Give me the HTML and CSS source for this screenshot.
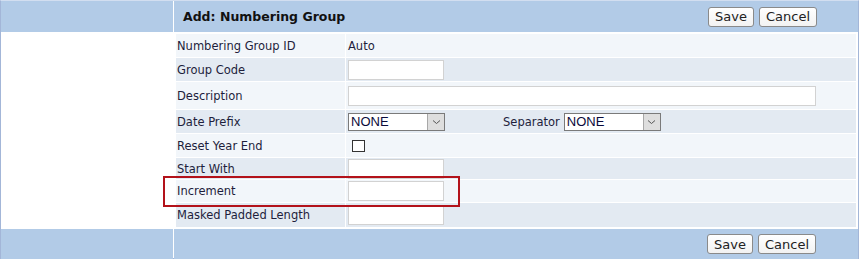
FILE: index.html
```html
<!DOCTYPE html>
<html lang="en">
<head>
    <meta charset="UTF-8">
    <title>Add: Numbering Group</title>
    <link rel="stylesheet" href="styles.css">
</head>
<body>
    <div class="frame">
        <div class="side head"></div>
        <div class="main head">
            <span class="title">Add: Numbering Group</span>
            <div class="actions">
                <button class="btn save">Save</button>
                <button class="btn cancel">Cancel</button>
            </div>
        </div>

        <div class="side"></div>
        <div class="main body">
            <table class="form-table">
                <tr class="light h23">
                    <td class="label">Numbering Group ID</td>
                    <td class="value">Auto</td>
                </tr>
                <tr class="dark h23">
                    <td class="label">Group Code</td>
                    <td class="value"><input type="text" class="field short"></td>
                </tr>
                <tr class="light h27">
                    <td class="label">Description</td>
                    <td class="value"><input type="text" class="field long"></td>
                </tr>
                <tr class="dark h23">
                    <td class="label">Date Prefix</td>
                    <td class="value">
                        <div class="inline">
                            <div class="select">
                                <span class="select-text">NONE</span>
                                <span class="select-btn">
                                    <svg width="9" height="6" viewBox="0 0 9 6"><path d="M1 1.5 L4.5 4.5 L8 1.5" fill="none" stroke="#555" stroke-width="1"/></svg>
                                </span>
                            </div>
                            <span class="sep-label">Separator</span>
                            <div class="select">
                                <span class="select-text">NONE</span>
                                <span class="select-btn">
                                    <svg width="9" height="6" viewBox="0 0 9 6"><path d="M1 1.5 L4.5 4.5 L8 1.5" fill="none" stroke="#555" stroke-width="1"/></svg>
                                </span>
                            </div>
                        </div>
                    </td>
                </tr>
                <tr class="light h23">
                    <td class="label">Reset Year End</td>
                    <td class="value"><span class="check"></span></td>
                </tr>
                <tr class="dark h21">
                    <td class="label">Start With</td>
                    <td class="value"><input type="text" class="field short"></td>
                </tr>
                <tr class="light h22">
                    <td class="label">Increment</td>
                    <td class="value"><input type="text" class="field short"></td>
                </tr>
                <tr class="dark h24">
                    <td class="label">Masked Padded Length</td>
                    <td class="value"><input type="text" class="field short"></td>
                </tr>
            </table>
        </div>

        <div class="side foot"></div>
        <div class="main foot">
            <div class="actions">
                <button class="btn save">Save</button>
                <button class="btn cancel">Cancel</button>
            </div>
        </div>

        <!-- Markierung -->
        <div class="highlight"></div>
    </div>
</body>
</html>
```

FILE: styles.css
```css
body {
    margin: 0;
    padding: 0;
    background-color: #ffffff;
    font-family: "DejaVu Sans", Verdana, sans-serif;
    font-size: 11.5px;
    color: #1e1e3c;
}
.frame {
    position: relative;
    width: 857px;
    height: 257px;
    border: 1px solid #a3b6d8;
    border-top-color: #d2def0;
    display: grid;
    grid-template-columns: 172px 1fr;
    grid-template-rows: 31px 1fr 30px;
    gap: 1px;
    background-color: #ffffff;
}
.head, .foot {
    background-color: #b2cbe7;
}
.main.head {
    display: flex;
    align-items: center;
    justify-content: space-between;
    padding: 0 41px 0 9px;
}
.main.foot {
    display: flex;
    align-items: center;
    justify-content: flex-end;
    padding: 0 42px 0 0;
}
.title {
    font-weight: bold;
    font-size: 12.5px;
    color: #111111;
}
.actions {
    display: flex;
    gap: 5px;
}
.btn {
    height: 20px;
    padding: 0;
    font-family: "DejaVu Sans", Verdana, sans-serif;
    font-size: 13px;
    color: #222222;
    background: linear-gradient(#ffffff, #f2f2f2);
    border: 1px solid #8a8a8a;
    border-radius: 3px;
    cursor: pointer;
}
.btn.save {
    width: 46px;
}
.btn.cancel {
    width: 58px;
}
.main.body {
    padding: 1px 2px 0 2px;
}
.form-table {
    width: 100%;
    border-collapse: separate;
    border-spacing: 0 1px;
    margin-top: -1px;
}
.form-table td {
    padding: 0;
}
.form-table .label {
    width: 168px;
    padding-left: 1px;
    border-right: 1px solid #ffffff;
}
.form-table .value {
    padding-left: 2px;
}
.light td {
    background-color: #f2f6fa;
}
.dark td {
    background-color: #e3eaf2;
}
.h21 td { height: 21px; }
.h22 td { height: 22px; }
.h23 td { height: 23px; }
.h24 td { height: 24px; }
.h27 td { height: 27px; }
.field {
    display: block;
    box-sizing: border-box;
    height: 20px;
    margin: 0;
    padding: 0 2px;
    background-color: #ffffff;
    border: 1px solid #d2d2d2;
    font-size: 12px;
}
.field.short {
    width: 96px;
}
.field.long {
    width: 468px;
}
.inline {
    display: flex;
    align-items: center;
}
.select {
    box-sizing: border-box;
    width: 97px;
    height: 18px;
    display: flex;
    align-items: center;
    justify-content: space-between;
    background-color: #ffffff;
    border: 1px solid #7a7a7a;
    padding-left: 2px;
}
.select-text {
    font-family: "Liberation Sans", Arial, sans-serif;
    font-size: 13px;
    color: #0a0a3a;
}
.select-btn {
    box-sizing: border-box;
    width: 17px;
    height: 16px;
    display: flex;
    align-items: center;
    justify-content: center;
    background-color: #dedede;
    border-left: 1px solid #a8a8a8;
}
.sep-label {
    margin: 0 4px 0 58px;
}
.check {
    display: block;
    box-sizing: border-box;
    width: 13px;
    height: 12px;
    margin-left: 4px;
    border: 1px solid #333333;
    background-color: #ffffff;
}
.highlight {
    position: absolute;
    left: 162px;
    top: 175px;
    width: 293px;
    height: 27px;
    border: 2px solid #b3121a;
    pointer-events: none;
}
```
